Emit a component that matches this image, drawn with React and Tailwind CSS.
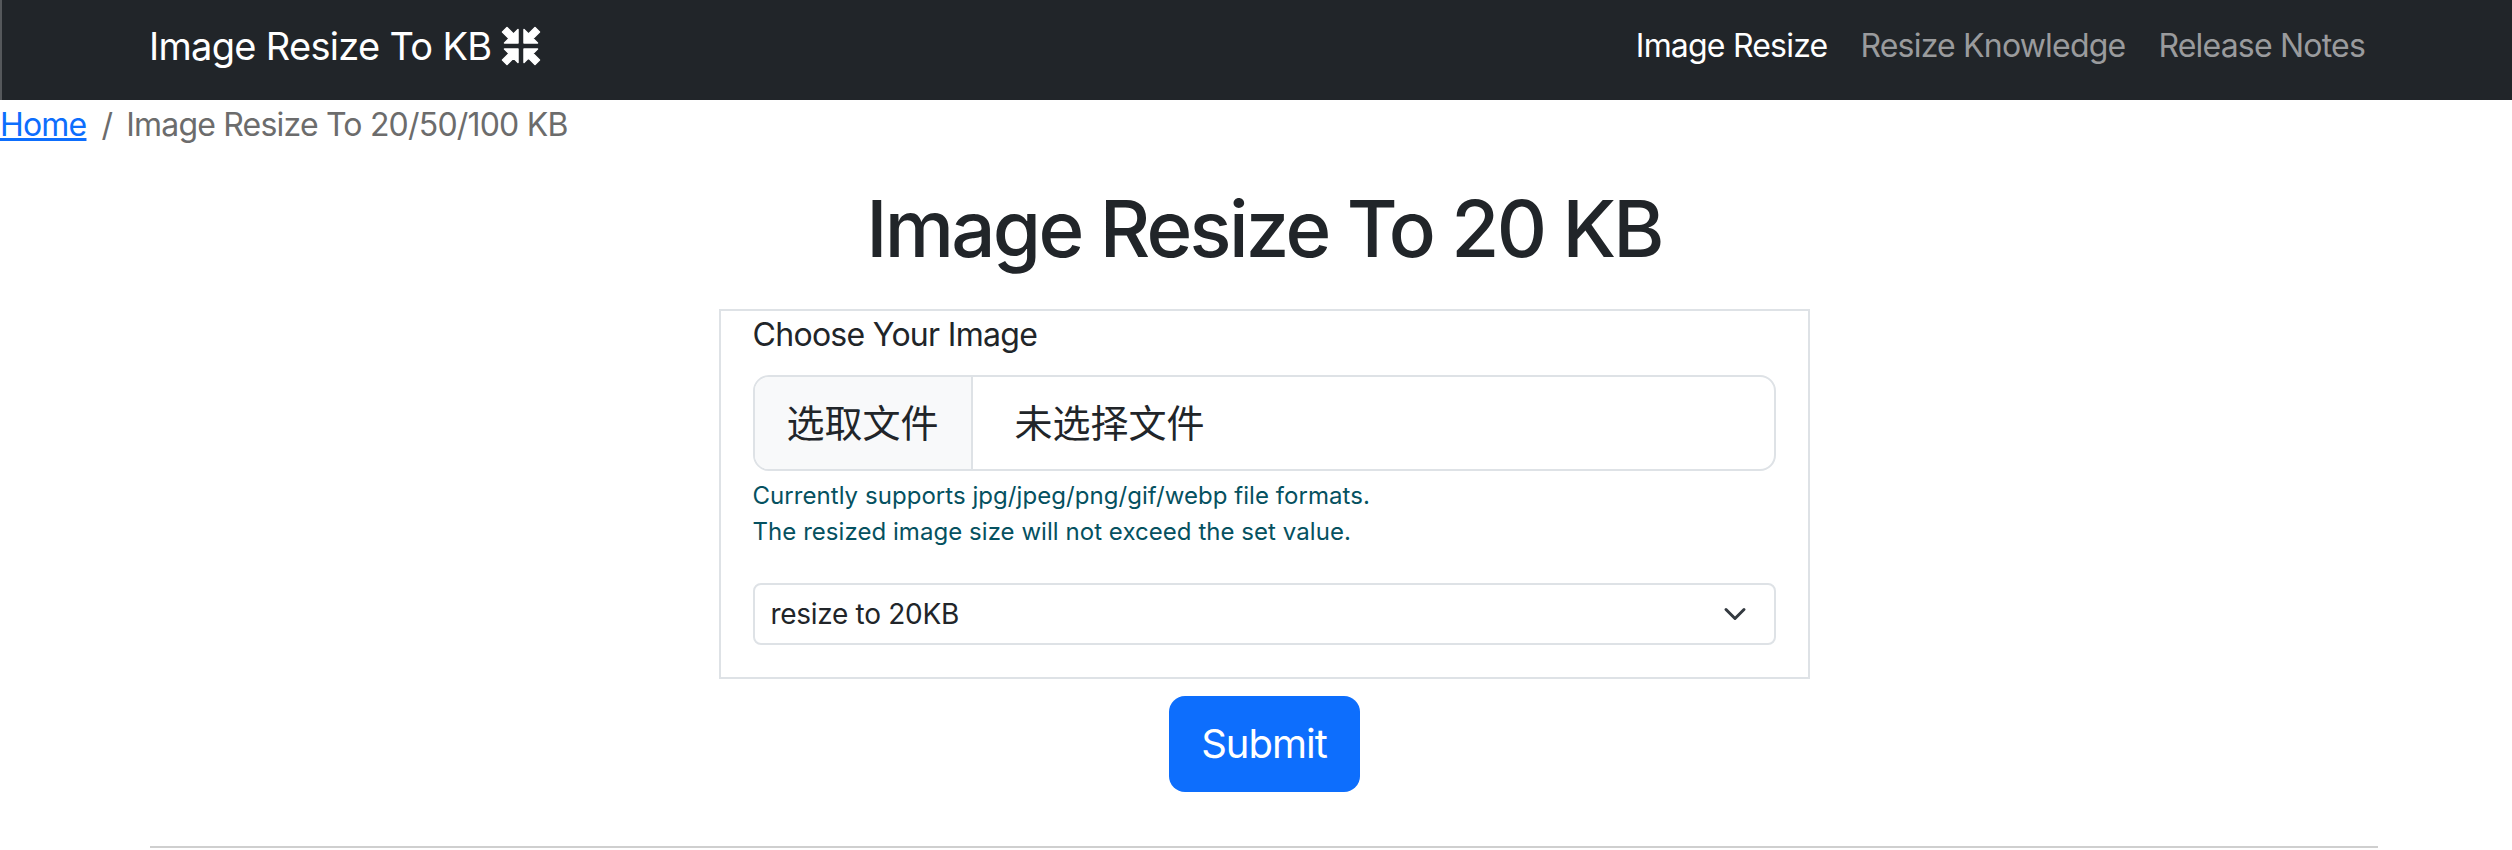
import React from 'react';

const font = { fontFamily: 'Inter, "Noto Sans CJK SC", sans-serif' };

const navLinks = [
  { label: 'Image Resize', active: true },
  { label: 'Resize Knowledge' },
  { label: 'Release Notes' },
];

// four arrows pointing at the centre, one quadrant rotated round
const CompressIcon = () => (
  <svg viewBox="0 0 40 40" className="ml-[10px] w-[40px] h-[40px]" fill="white" stroke="white" strokeWidth="1.5" strokeLinejoin="round">
    {[0, 90, 180, 270].map(r => (
      <path key={r} transform={`rotate(${r} 20 20)`} d="M17 17H3.5L8 12.5L1.5 6L6 1.5L12.5 8L17 3.5Z" />
    ))}
  </svg>
);

const Navbar = () => (
  <nav className="h-[100px] bg-[#212529] border-l-2 border-[#55585b] flex items-center justify-between pb-[8px] pl-[147px] pr-[134px]">
    <a className="flex items-center text-white text-[38px] tracking-[-0.7px]">
      Image Resize To KB
      <CompressIcon />
    </a>
    <ul className="flex gap-[33px] pr-[13px] text-[32px] tracking-[-0.8px]">
      {navLinks.map(l => (
        <li key={l.label} className={l.active ? 'text-white' : 'text-[#9a9b9d]'}>{l.label}</li>
      ))}
    </ul>
  </nav>
);

export default function App() {
  return (
    <div className="min-h-[850px] bg-white text-[#212529] overflow-hidden" style={font}>
      <Navbar />

      <div className="flex items-center h-[50px] text-[32px] tracking-[-0.8px] text-[#6c6c6c]">
        <a className="text-[#0d6efd] underline">Home</a>
        <span className="ml-[15px] mr-[14px]">/</span>
        <span>Image Resize To 20/50/100 KB</span>
      </div>

      <div className="pl-[150px] pr-[134px]">
        <h1 className="text-center text-[78px] leading-[92px] tracking-[-2.7px] font-medium mt-[33px] mb-[34px]">Image Resize To 20 KB</h1>

        <div className="w-[1091px] h-[370px] mx-auto border-2 border-[#dee2e6] px-[32px]">
          <label className="block text-[32px] leading-[44px] tracking-[-0.7px] mt-[2px]">Choose Your Image</label>
          <div className="flex h-[96px] mt-[18px] border-2 border-[#dee2e6] rounded-[16px] overflow-hidden text-[38px]">
            <div className="flex items-center px-[32px] bg-[#f8f9fa] border-r-2 border-[#dee2e6]">选取文件</div>
            <div className="flex items-center pl-[42px]">未选择文件</div>
          </div>
          <p className="text-[24px] leading-[36px] tracking-[0.05px] text-[#055160] mt-[7px]">
            Currently supports jpg/jpeg/png/gif/webp file formats.
            <br />
            The resized image size will not exceed the set value.
          </p>
          <div className="flex items-center justify-between h-[62px] mt-[33px] border-2 border-[#dee2e6] rounded-[8px] pl-[16px] pr-[27px] text-[28px] tracking-[-0.3px]">
            <span>resize to 20KB</span>
            <svg viewBox="0 0 16 16" className="w-[24px] h-[24px]" fill="none" stroke="#343a40" strokeWidth="2" strokeLinecap="round" strokeLinejoin="round">
              <path d="m2 5 6 6 6-6" />
            </svg>
          </div>
        </div>

        <div className="flex justify-center mt-[17px]">
          <button className="w-[191px] h-[96px] bg-[#0d6efd] text-white text-[40px] tracking-[-1px] rounded-[16px]">Submit</button>
        </div>

        <hr className="mt-[54px] border-0 border-t-2 border-[#cfcfcf]" />
      </div>
    </div>
  );
}
